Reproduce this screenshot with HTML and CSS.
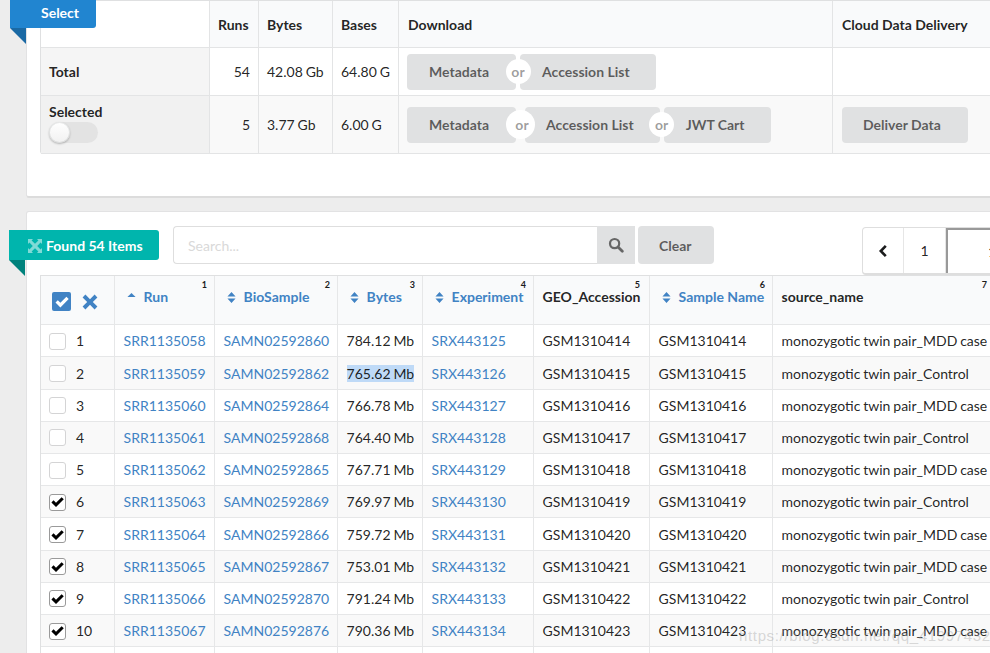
FILE: index.html
```html
<!DOCTYPE html>
<html lang="en">
<head>
<meta charset="utf-8">
<title>Run Selector</title>
<link rel="stylesheet" href="styles.css">
</head>
<body>
<svg class="defs" width="0" height="0" aria-hidden="true">
  <symbol id="check" viewBox="0 0 16 16"><path d="M1.5 8.5 L3.8 6.2 L6.4 8.8 L12.4 2.8 L14.7 5.1 L6.4 13.4 Z" fill="currentColor"/></symbol>
  <symbol id="sort" viewBox="0 0 10 12"><path d="M5 0 L9.5 5 H.5 Z M.5 7 H9.5 L5 12 Z" fill="currentColor"/></symbol>
  <symbol id="sortup" viewBox="0 0 10 12"><path d="M5 1 L9.5 5.5 H.5 Z" fill="currentColor"/></symbol>
</svg>
<main class="page">
  <section class="card summary">
    <div class="ribbon blue">Select</div>
    <table class="stats">
      <colgroup><col class="s1"><col class="s2"><col class="s3"><col class="s4"><col class="s5"><col class="s6"></colgroup>
      <thead>
        <tr class="r-head"><th class="blank"></th><th>Runs</th><th>Bytes</th><th>Bases</th><th class="wideth">Download</th><th class="wideth">Cloud Data Delivery</th></tr>
      </thead>
      <tbody>
        <tr class="r-total">
          <th class="rowhead total">Total</th><td class="num">54</td><td>42.08 Gb</td><td>64.80 G</td>
          <td class="btn-cell"><div class="btns">
            <span class="btn meta">Metadata</span><span class="or"><span class="orc">or</span></span><span class="btn">Accession List</span>
          </div></td>
          <td></td>
        </tr>
        <tr class="r-sel">
          <th class="rowhead sel"><span class="sel-label">Selected</span><span class="toggle"><span class="knob"></span></span></th>
          <td class="num">5</td><td>3.77 Gb</td><td>6.00 G</td>
          <td class="btn-cell"><div class="btns">
            <span class="btn meta">Metadata</span><span class="or wide"><span class="orc">or</span></span><span class="btn tight">Accession List</span><span class="or"><span class="orc">or</span></span><span class="btn">JWT Cart</span>
          </div></td>
          <td class="btn-cell"><div class="btns"><span class="btn deliver">Deliver Data</span></div></td>
        </tr>
      </tbody>
    </table>
  </section>

  <section class="card results">
    <div class="toolbar">
      <div class="ribbon teal static">
        <svg class="expand" width="14" height="14" viewBox="0 0 14 14" aria-hidden="true"><path d="M0 0 H5 L3.6 1.4 L7 4.8 L10.4 1.4 L9 0 H14 V5 L12.6 3.6 L9.2 7 L12.6 10.4 L14 9 V14 H9 L10.4 12.6 L7 9.2 L3.6 12.6 L5 14 H0 V9 L1.4 10.4 L4.8 7 L1.4 3.6 L0 5 Z" fill="currentColor"/></svg>
        Found 54 Items
      </div>
      <div class="search">
        <span class="search-input">Search...</span>
        <span class="search-btn"><svg width="16" height="16" viewBox="0 0 16 16" aria-hidden="true"><circle cx="6.6" cy="6.6" r="4.6" fill="none" stroke="currentColor" stroke-width="2.2"/><path d="M10 10 L14.3 14.3" stroke="currentColor" stroke-width="2.8" stroke-linecap="round"/></svg></span>
      </div>
      <span class="btn clear">Clear</span>
      <nav class="pager">
        <span class="pg chev"><svg width="10" height="14" viewBox="0 0 10 14" aria-hidden="true"><path d="M7.8 1.8 L2.8 7 L7.8 12.2" fill="none" stroke="currentColor" stroke-width="2.6"/></svg></span>
        <span class="pg">1</span>
        <span class="pg active">1</span>
      </nav>
    </div>
    <table class="runs">
      <colgroup><col class="c1"><col class="c2"><col class="c3"><col class="c4"><col class="c5"><col class="c6"><col class="c7"><col class="c8"></colgroup>
      <thead>
        <tr>
          <th class="sel-head">
            <span class="sel-tools">
              <span class="allbox"><svg width="16" height="16"><use href="#check"/></svg></span>
              <svg class="clear-x" width="16" height="16" viewBox="0 0 16 16" aria-hidden="true"><path d="M3.4 .6 L8 5.2 L12.6 .6 L15.4 3.4 L10.8 8 L15.4 12.6 L12.6 15.4 L8 10.8 L3.4 15.4 L.6 12.6 L5.2 8 L.6 3.4 Z" fill="currentColor"/></svg>
            </span>
          </th>
          <th class="sortable"><sup class="ord">1</sup><svg class="si" width="9" height="11"><use href="#sortup"/></svg>Run</th>
          <th class="sortable"><sup class="ord">2</sup><svg class="si" width="9" height="11"><use href="#sort"/></svg>BioSample</th>
          <th class="sortable"><sup class="ord">3</sup><svg class="si" width="9" height="11"><use href="#sort"/></svg>Bytes</th>
          <th class="sortable"><sup class="ord">4</sup><svg class="si" width="9" height="11"><use href="#sort"/></svg>Experiment</th>
          <th><sup class="ord ord-geo">5</sup>GEO_Accession</th>
          <th class="sortable"><sup class="ord">6</sup><svg class="si" width="9" height="11"><use href="#sort"/></svg>Sample Name</th>
          <th><sup class="ord">7</sup>source_name</th>
        </tr>
      </thead>
      <tbody>
        <tr><td><div class="rownum"><span class="cb"></span>1</div></td><td><a href="#">SRR1135058</a></td><td><a href="#">SAMN02592860</a></td><td>784.12 Mb</td><td><a href="#">SRX443125</a></td><td>GSM1310414</td><td>GSM1310414</td><td>monozygotic twin pair_MDD case</td></tr>
        <tr><td><div class="rownum"><span class="cb"></span>2</div></td><td><a href="#">SRR1135059</a></td><td><a href="#">SAMN02592862</a></td><td><span class="hl">765.62 Mb</span></td><td><a href="#">SRX443126</a></td><td>GSM1310415</td><td>GSM1310415</td><td>monozygotic twin pair_Control</td></tr>
        <tr><td><div class="rownum"><span class="cb"></span>3</div></td><td><a href="#">SRR1135060</a></td><td><a href="#">SAMN02592864</a></td><td>766.78 Mb</td><td><a href="#">SRX443127</a></td><td>GSM1310416</td><td>GSM1310416</td><td>monozygotic twin pair_MDD case</td></tr>
        <tr><td><div class="rownum"><span class="cb"></span>4</div></td><td><a href="#">SRR1135061</a></td><td><a href="#">SAMN02592868</a></td><td>764.40 Mb</td><td><a href="#">SRX443128</a></td><td>GSM1310417</td><td>GSM1310417</td><td>monozygotic twin pair_Control</td></tr>
        <tr><td><div class="rownum"><span class="cb"></span>5</div></td><td><a href="#">SRR1135062</a></td><td><a href="#">SAMN02592865</a></td><td>767.71 Mb</td><td><a href="#">SRX443129</a></td><td>GSM1310418</td><td>GSM1310418</td><td>monozygotic twin pair_MDD case</td></tr>
        <tr><td><div class="rownum"><span class="cb on"><svg width="16" height="16"><use href="#check"/></svg></span>6</div></td><td><a href="#">SRR1135063</a></td><td><a href="#">SAMN02592869</a></td><td>769.97 Mb</td><td><a href="#">SRX443130</a></td><td>GSM1310419</td><td>GSM1310419</td><td>monozygotic twin pair_Control</td></tr>
        <tr><td><div class="rownum"><span class="cb on"><svg width="16" height="16"><use href="#check"/></svg></span>7</div></td><td><a href="#">SRR1135064</a></td><td><a href="#">SAMN02592866</a></td><td>759.72 Mb</td><td><a href="#">SRX443131</a></td><td>GSM1310420</td><td>GSM1310420</td><td>monozygotic twin pair_MDD case</td></tr>
        <tr><td><div class="rownum"><span class="cb on"><svg width="16" height="16"><use href="#check"/></svg></span>8</div></td><td><a href="#">SRR1135065</a></td><td><a href="#">SAMN02592867</a></td><td>753.01 Mb</td><td><a href="#">SRX443132</a></td><td>GSM1310421</td><td>GSM1310421</td><td>monozygotic twin pair_MDD case</td></tr>
        <tr><td><div class="rownum"><span class="cb on"><svg width="16" height="16"><use href="#check"/></svg></span>9</div></td><td><a href="#">SRR1135066</a></td><td><a href="#">SAMN02592870</a></td><td>791.24 Mb</td><td><a href="#">SRX443133</a></td><td>GSM1310422</td><td>GSM1310422</td><td>monozygotic twin pair_Control</td></tr>
        <tr><td><div class="rownum"><span class="cb on"><svg width="16" height="16"><use href="#check"/></svg></span>10</div></td><td><a href="#">SRR1135067</a></td><td><a href="#">SAMN02592876</a></td><td>790.36 Mb</td><td><a href="#">SRX443134</a></td><td>GSM1310423</td><td>GSM1310423</td><td>monozygotic twin pair_MDD case</td></tr>
        <tr><td></td><td></td><td></td><td></td><td></td><td></td><td></td><td></td></tr>
      </tbody>
    </table>
  </section>
</main>
<div class="watermark">https://blog.csdn.net/qq_41997432</div>
</body>
</html>
```

FILE: styles.css
```css
* { box-sizing: border-box; }
html, body { margin: 0; height: 653px; overflow: hidden; }
body {
  background: #ededed;
  font-family: Lato, "Open Sans", sans-serif;
  font-size: 14px;
  line-height: 20px;
  color: rgba(0, 0, 0, .87);
  position: relative;
  word-spacing: -.7px;
}
.defs { position: absolute; }
.page { width: 1100px; padding-left: 26px; display: flex; flex-direction: column; gap: 13px; }

.card {
  position: relative;
  background: #fff;
  border: 1px solid #e2e2e3;
  border-bottom: 2px solid #dcdcdc;
  border-radius: 3px;
  padding-left: 13px;
}
.summary { height: 198px; border-top: 0; border-top-left-radius: 0; border-top-right-radius: 0; }
.results { padding-top: 14px; height: 500px; border-bottom: 0; }

/* ribbon labels */
.ribbon {
  position: absolute;
  left: -17px;
  top: 0;
  height: 28px;
  width: 86px;
  padding-left: 31px;
  line-height: 26px;
  font-weight: 700;
  color: #fff;
  border-radius: 0 0 3px 0;
  z-index: 2;
  word-spacing: 0;
}
.ribbon::after {
  content: "";
  position: absolute;
  left: 0;
  top: 100%;
  border-style: solid;
  border-width: 0 16px 16px 0;
  border-color: transparent;
}
.blue { background: #2185d0; }
.blue::after { border-right-color: #1a69a4; }
.teal { background: #00b5ad; }
.teal::after { border-right-color: #00827c; }
.ribbon.static {
  position: relative;
  left: auto;
  flex: none;
  margin: 4px 0 0 -31px;
  width: 150px;
  height: 30px;
  padding: 1px 0 0 19px;
  line-height: 30px;
  border-radius: 0 3px 3px 0;
  display: flex;
  align-items: center;
  gap: 4px;
}
.expand { color: rgba(255, 255, 255, .5); }

/* summary table */
table { border-spacing: 0; border-collapse: separate; table-layout: fixed; }
.stats, .runs { border-left: 1px solid #dfe0e1; }
.stats { width: 961px; border-top: 1px solid #dfe0e1; border-bottom-left-radius: 3px; }
.s1 { width: 169px; } .s2 { width: 49px; } .s3 { width: 74px; } .s4 { width: 66px; } .s5 { width: 434px; } .s6 { width: 168px; }
.stats th, .stats td {
  padding: 0 8px;
  border-right: 1px solid #e3e4e5;
  border-bottom: 1px solid #e3e4e5;
  text-align: left;
  white-space: nowrap;
}
.stats thead th { background: #f9fafb; font-weight: 700; padding-top: 2px; }
.stats thead th.wideth { padding-left: 9px; word-spacing: 0; }
.stats thead th.blank { background: #fff; }
.r-head { height: 47px; }
.r-total { height: 48px; }
.r-sel { height: 58px; background: #f9f9f9; }
.stats .num { text-align: right; }
.stats .rowhead { font-weight: 700; }
.stats .total { background: #f5f5f5; }
.stats .sel { background: #f1f1f1; vertical-align: top; padding-top: 6px; }
.sel-label { display: block; }
.toggle { display: flex; width: 49px; height: 21px; border-radius: 11px; background: #e3e3e3; }
.knob { width: 21px; height: 21px; border-radius: 50%; background: linear-gradient(#fff, #f1f1f1); box-shadow: 0 1px 2px rgba(34, 36, 38, .3), 0 0 0 1px rgba(34, 36, 38, .1) inset; }

.stats .btn-cell { padding: 0 0 0 8px; }
.btns { display: flex; align-items: stretch; height: 36px; }
.btn {
  display: flex;
  align-items: center;
  height: 36px;
  padding: 0 26px 0 22px;
  background: #e0e1e2;
  color: rgba(0, 0, 0, .6);
  font-weight: 700;
  border-radius: 4px;
  white-space: nowrap;
  word-spacing: 0;
}
.btn.meta { width: 109px; }
.btn.tight { padding-left: 21px; }
.btn.deliver { width: 126px; margin-left: 1px; padding-left: 21px; }
.or { position: relative; flex: none; width: 4px; display: flex; align-items: center; justify-content: center; z-index: 1; }
.or.wide { width: 9px; }
.orc {
  flex: none;
  width: 25px;
  height: 25px;
  border-radius: 50%;
  background: #fff;
  color: rgba(0, 0, 0, .4);
  font-weight: 700;
  text-align: center;
  line-height: 25px;
}
.or.wide .orc { width: 29px; height: 29px; line-height: 29px; padding-left: 3px; }

/* toolbar */
.toolbar { display: flex; align-items: flex-start; height: 49px; }
.search { display: flex; margin-left: 14px; flex: none; height: 38px; }
.search-input {
  width: 424px;
  padding-left: 14px;
  border: 1px solid #dedede;
  border-right: 0;
  border-radius: 4px 0 0 4px;
  color: #d9d9d9;
  line-height: 38px;
}
.search-btn { width: 38px; background: #e0e1e2; color: #666; display: flex; align-items: center; justify-content: center; }
.clear { margin-left: 3px; height: 38px; width: 76px; padding: 1px 0 0 21px; flex: none; }
.pager {
  flex: none;
  margin: 1px 0 0 148px;
  height: 48px;
  display: flex;
  background: #fff;
  border: 1px solid #dedede;
  border-bottom-width: 2px;
  border-radius: 4px;
}
.pg { width: 42px; display: flex; align-items: center; justify-content: center; border-right: 1px solid #e6e6e6; }
.chev { width: 41px; color: #1b1c1d; }
.pg.active {
  width: 200px;
  justify-content: flex-start;
  padding-left: 40px;
  border-left: 2px solid #999;
  border-top: 2px solid #999;
}

/* results table */
.runs { width: 955px; border-top: 1px solid #dfe0e1; }
.c1 { width: 74px; } .c2 { width: 100px; } .c3 { width: 123px; } .c4 { width: 85px; } .c5 { width: 111px; } .c6 { width: 116px; } .c7 { width: 123px; } .c8 { width: 222px; }
.runs th, .runs td {
  padding: 0 0 0 8.6px;
  border-right: 1px solid #e6e7e8;
  border-bottom: 1px solid #e6e7e8;
  text-align: left;
  white-space: nowrap;
  overflow: hidden;
}
.runs td { padding-top: 1px; }
.runs thead tr { height: 49.3px; }
.runs tbody tr { height: 32.2px; }
.runs tbody tr:nth-child(even) { background: #f9f9f9; }
.runs th {
  position: relative;
  background: #f9fafb;
  font-weight: 700;
  vertical-align: top;
  padding-top: 11px;
  word-spacing: 0;
}
.runs th.sortable { color: #4183c4; }
.si { margin: 0 7.4px 0 3.6px; color: #4183c4; vertical-align: -1px; }
.ord {
  position: absolute;
  top: 4px;
  right: 7px;
  font-size: 9px;
  line-height: 10px;
  font-weight: 700;
  color: #1b1c1d;
}
.ord-geo { right: 9px; }
a { color: #4183c4; text-decoration: none; }
.hl { background: #bfdaf7; }
.runs th.sel-head { padding: 16px 0 0 11px; }
.sel-tools { display: flex; align-items: center; gap: 11px; }
.allbox { width: 19px; height: 19px; border-radius: 2px; background: #4183c4; color: #fff; display: flex; align-items: center; justify-content: center; }
.clear-x { color: #4183c4; }
.rownum { display: flex; align-items: center; gap: 10px; margin-left: -.6px; }
.cb { width: 17px; height: 17px; border: 1px solid #d4d4d5; border-radius: 3px; background: #fff; display: flex; align-items: center; justify-content: center; color: #000; }
.cb.on { border-color: #9a9a9a; }

.watermark {
  position: absolute;
  left: 739px;
  top: 626px;
  font-family: "Liberation Sans", sans-serif;
  font-size: 15px;
  letter-spacing: .65px;
  word-spacing: 0;
  color: rgba(160, 160, 160, .4);
  white-space: nowrap;
}
```
